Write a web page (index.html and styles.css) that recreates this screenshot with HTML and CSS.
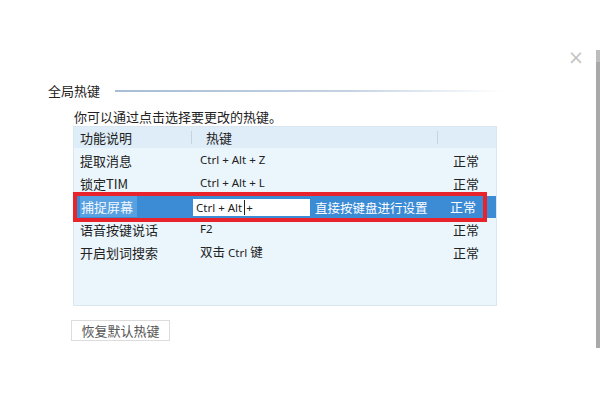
FILE: index.html
```html
<!DOCTYPE html>
<html lang="zh-CN">
<head>
    <meta charset="UTF-8">
    <title>全局热键</title>
    <link rel="stylesheet" href="styles.css">
</head>
<body>
    <div class="window">
        <span class="close">&times;</span>
        <div class="scrollbar"></div>

        <div class="section">
            <div class="section-title">
                <span>全局热键</span>
                <div class="title-line"></div>
            </div>
            <p class="hint">你可以通过点击选择要更改的热键。</p>

            <div class="hotkey-table">
                <div class="row head">
                    <div class="cell">功能说明</div>
                    <div class="cell key">热键</div>
                    <div class="cell state"></div>
                </div>
                <div class="row">
                    <div class="cell">提取消息</div>
                    <div class="cell key">Ctrl + Alt + Z</div>
                    <div class="cell state">正常</div>
                </div>
                <div class="row">
                    <div class="cell">锁定TIM</div>
                    <div class="cell key">Ctrl + Alt + L</div>
                    <div class="cell state">正常</div>
                </div>
                <div class="row selected">
                    <div class="cell"><span class="mark">捕捉屏幕</span></div>
                    <div class="cell key editing">
                        <span class="key-input">Ctrl + Alt<i class="caret"></i>+</span>
                        <span class="key-tip">直接按键盘进行设置</span>
                    </div>
                    <div class="cell state">正常</div>
                </div>
                <div class="row">
                    <div class="cell">语音按键说话</div>
                    <div class="cell key">F2</div>
                    <div class="cell state">正常</div>
                </div>
                <div class="row">
                    <div class="cell">开启划词搜索</div>
                    <div class="cell key"><span class="cjk">双击</span> Ctrl <span class="cjk">键</span></div>
                    <div class="cell state">正常</div>
                </div>
            </div>

            <button class="reset-btn">恢复默认热键</button>
        </div>
    </div>
</body>
</html>
```

FILE: styles.css
```css
body {
    margin: 0;
    background: #ffffff;
    color: #222;
    font-family: "Noto Sans CJK SC", "Noto Sans", sans-serif;
    font-size: 13px;
}

.window {
    position: relative;
    width: 600px;
    height: 400px;
    overflow: hidden;
}

.close {
    position: absolute;
    left: 568px;
    top: 47px;
    font-size: 19px;
    line-height: 20px;
    color: #c4c4c4;
    font-family: "DejaVu Sans", sans-serif;
}

.scrollbar {
    position: absolute;
    left: 596px;
    top: 50px;
    width: 4px;
    height: 298px;
    background: #a9a9a9;
    border-top: 12px solid #bdbdbd;
    box-sizing: border-box;
}

.section {
    padding: 82px 0 0 48px;
}

.section-title {
    display: flex;
    align-items: center;
    width: 457px;
    height: 18px;
    line-height: 18px;
}

.title-line {
    flex: 1;
    height: 2px;
    margin-left: 15px;
    background: linear-gradient(90deg, #a8bdd4, #c4d3e3 60%, #ffffff);
}

.hint {
    margin: 8px 0 0 26px;
    height: 18px;
    line-height: 18px;
}

.hotkey-table {
    margin: 0 0 0 25px;
    width: 424px;
    height: 180px;
    box-sizing: border-box;
    background: #eaf5fc;
    border: 1px solid #dbe7f0;
}

.row {
    display: grid;
    grid-template-columns: 117px 246px 1fr;
    height: 23px;
    line-height: 23px;
    position: relative;
}

.row.head {
    height: 21px;
    line-height: 21px;
    background: #deedf8;
    margin-bottom: 1px;
}

.cell {
    padding-left: 6px;
    white-space: nowrap;
}

.cell.key {
    padding-left: 9px;
    font-family: "Noto Sans", "Noto Sans CJK SC", sans-serif;
    font-size: 11.5px;
    line-height: 21px;
}

.cell.key .cjk {
    font-family: "Noto Sans CJK SC", sans-serif;
    font-size: 12.5px;
}

.cell.state {
    padding-left: 16px;
}

.head .cell.key,
.head .cell.state {
    border-left: 1px solid #c5d4e0;
    height: 13px;
    margin-top: 4px;
    line-height: 13px;
    font-family: "Noto Sans CJK SC", sans-serif;
    font-size: 13px;
}

.head .cell.key {
    padding-left: 14px;
}

.row.selected {
    background: #3b8bd5;
    color: #ffffff;
    height: 22px;
    line-height: 22px;
    margin-top: 1px;
}

.row.selected::after {
    content: "";
    position: absolute;
    left: -1px;
    right: 9px;
    top: -4px;
    bottom: -4px;
    border: 4px solid #e8232b;
    pointer-events: none;
}

.mark {
    background: #57a0e2;
    padding: 1px 4px 1px 1px;
    color: #f4f8fc;
}

.cell.key.editing {
    padding-left: 2px;
    display: flex;
    align-items: center;
}

.key-input {
    display: flex;
    align-items: center;
    width: 114px;
    height: 17px;
    background: #ffffff;
    color: #222;
    padding-left: 3px;
    line-height: 17px;
}

.caret {
    display: inline-block;
    width: 1px;
    height: 15px;
    background: #222;
    margin: 0 1px 0 2px;
}

.key-tip {
    margin-left: 5px;
    font-family: "Noto Sans CJK SC", sans-serif;
    font-size: 12.5px;
    color: #ffffff;
}

.row.selected .cell.state {
    padding-left: 13px;
}

.reset-btn {
    display: block;
    margin: 14px 0 0 23px;
    width: 99px;
    height: 21px;
    padding: 0;
    background: #ffffff;
    border: 1px solid #dcdcdc;
    color: #555;
    font-family: "Noto Sans CJK SC", sans-serif;
    font-size: 13px;
    line-height: 19px;
}
```
